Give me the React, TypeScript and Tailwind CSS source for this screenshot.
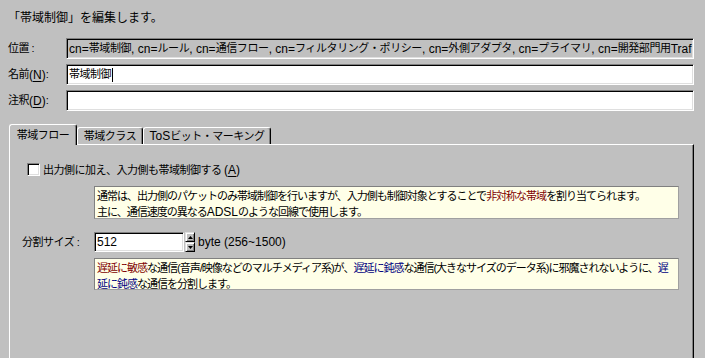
import React from 'react';

const sunken =
  'border border-t-[#808080] border-l-[#808080] border-b-white border-r-white shadow-[inset_1px_1px_0_#000,inset_-1px_-1px_0_#dfdfdf]';
const raised =
  'border border-t-[#dfdfdf] border-l-[#dfdfdf] border-b-black border-r-black shadow-[inset_1px_1px_0_#fff,inset_-1px_-1px_0_#808080]';

// latin runs are drawn a bit larger than the kana/kanji, like the old UI font
const mixed = (text: string) =>
  text.split(/([\x20-\x7e]+)/).map((part, i) =>
    /[\x21-\x7e]/.test(part) ? (
      <span key={i} className="text-[12px] tracking-normal">
        {part}
      </span>
    ) : (
      part
    )
  );

const Key: React.FC<{ k: string }> = ({ k }) => (
  <span className="text-[12px] tracking-normal">
    (<span className="underline underline-offset-2">{k}</span>)
  </span>
);

interface FieldRowProps {
  label: React.ReactNode;
  children?: React.ReactNode;
  readOnly?: boolean;
}

const FieldRow: React.FC<FieldRowProps> = ({ label, children, readOnly }) => (
  <>
    <div className="flex items-center h-[21px] whitespace-nowrap">{label}</div>
    <div
      className={`${sunken} h-[21px] flex items-center px-[2px] overflow-hidden whitespace-nowrap ${
        readOnly ? 'bg-[#c0c0c0] tracking-[-0.4px]' : 'bg-white'
      }`}
    >
      {children}
    </div>
  </>
);

const Tab: React.FC<{ label: string; active?: boolean; w: string }> = ({ label, active, w }) => (
  <div
    className={`${w} flex items-center justify-center rounded-t-[3px] border-t border-l border-white border-r border-r-black shadow-[inset_-1px_0_0_#808080] bg-[#c0c0c0] ${
      active ? 'h-[21px] relative z-10 -mb-px' : 'h-[17px]'
    }`}
  >
    {mixed(label)}
  </div>
);

const Red: React.FC<{ children: React.ReactNode }> = ({ children }) => (
  <span className="text-[#800000]">{children}</span>
);
const Navy: React.FC<{ children: React.ReactNode }> = ({ children }) => (
  <span className="text-[#000080]">{children}</span>
);

const Note: React.FC<{ children: React.ReactNode; className?: string }> = ({ children, className }) => (
  <div
    className={`ml-[67px] w-[585px] bg-[#ffffe8] border border-t-[#808080] border-l-[#808080] border-b-[#a0a0a0] border-r-[#a0a0a0] px-[2px] py-[1px] leading-4 tracking-[-1px] whitespace-nowrap overflow-hidden ${
      className ?? ''
    }`}
  >
    {children}
  </div>
);

export default function App() {
  return (
    <div className="w-[705px] h-[358px] bg-[#c0c0c0] overflow-hidden text-[11px] tracking-[-0.5px] text-black font-['Liberation_Sans','Noto_Sans_CJK_JP',sans-serif]">
      <div className="h-[38px] pt-[10px] pl-[8px] leading-4 text-[12px] tracking-normal">
        「帯域制御」を編集します。
      </div>

      <div className="grid grid-cols-[58px_1fr] gap-y-[5px] pl-[8px] pr-[11px]">
        <FieldRow label="位置 :" readOnly>
          {mixed(
            'cn=帯域制御, cn=ルール, cn=通信フロー, cn=フィルタリング・ポリシー, cn=外側アダプタ, cn=プライマリ, cn=開発部門用Traf'
          )}
        </FieldRow>
        <FieldRow
          label={
            <>
              名前 <Key k="N" />:
            </>
          }
        >
          帯域制御
          <span className="inline-block w-px h-[14px] bg-black ml-px" />
        </FieldRow>
        <FieldRow
          label={
            <>
              注釈 <Key k="D" />:
            </>
          }
        />
      </div>

      <div className="mt-[14px] ml-[9px] flex items-end h-[19px]">
        <Tab label="帯域フロー" active w="w-[68px]" />
        <Tab label="帯域クラス" w="w-[66px]" />
        <Tab label="ToSビット・マーキング" w="w-[128px]" />
      </div>

      <div className="ml-[9px] mr-[11px] h-[230px] border-t border-l border-white border-r border-r-black shadow-[inset_-1px_0_0_#808080] pt-[18px] pl-[17px]">
        <div className="flex items-center h-[13px] gap-[3px]">
          <div className={`${sunken} w-[13px] h-[13px] bg-white`} />
          <span className="leading-4">
            出力側に加え、入力側も帯域制御する <Key k="A" />
          </span>
        </div>

        <Note className="mt-[10px] h-[33px]">
          通常は、出力側のパケットのみ帯域制御を行いますが、入力側も制御対象とすることで<Red>非対称な帯域</Red>を割り当てられます。
          <br />
          {mixed('主に、通信速度の異なるADSLのような回線で使用します。')}
        </Note>

        <div className="mt-[13px] flex items-center h-[20px] -ml-[5px]">
          <span className="w-[72px]">分割サイズ :</span>
          <div className={`${sunken} w-[90px] h-[20px] bg-white flex items-center px-[2px] text-[12px] tracking-normal`}>
            512
          </div>
          <div className="flex flex-col w-[10px] h-[20px] ml-px">
            <div className={`${raised} h-[10px] flex items-center justify-center`}>
              <svg width="5" height="3" viewBox="0 0 5 3">
                <path d="M2.5 0L5 3H0z" fill="#000" />
              </svg>
            </div>
            <div className={`${raised} h-[10px] flex items-center justify-center`}>
              <svg width="5" height="3" viewBox="0 0 5 3">
                <path d="M0 0H5L2.5 3z" fill="#000" />
              </svg>
            </div>
          </div>
          <span className="ml-[3px] text-[12px] tracking-normal">byte (256~1500)</span>
        </div>

        <Note className="mt-[6px] h-[32px]">
          <Red>遅延に敏感</Red>な通信(音声/映像などのマルチメディア系)が、<Navy>遅延に鈍感</Navy>な通信(大きなサイズのデータ系)に邪魔されないように、<Navy>遅</Navy>
          <br />
          <Navy>延に鈍感</Navy>な通信を分割します。
        </Note>
      </div>
    </div>
  );
}
